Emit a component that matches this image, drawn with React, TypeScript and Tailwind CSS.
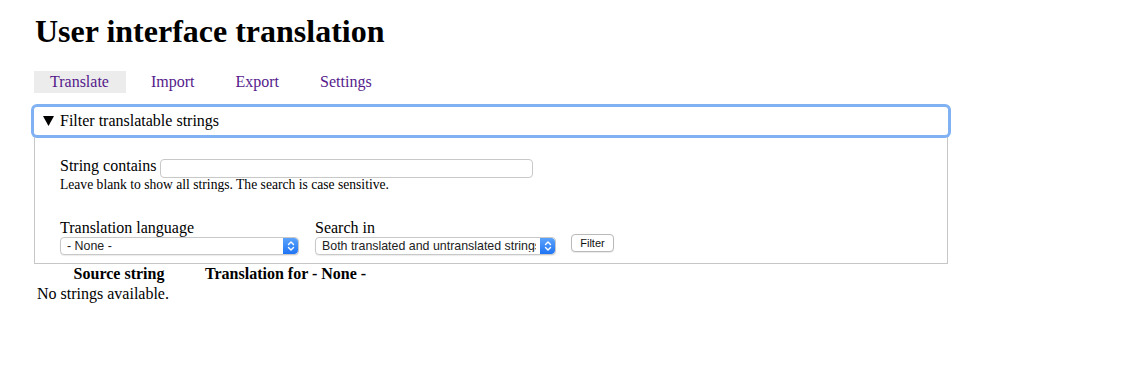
const tabs = ["Translate", "Import", "Export", "Settings"];

function Stepper() {
  return (
    <span className="flex h-full w-[15px] shrink-0 items-center justify-center rounded-r-[4px] bg-gradient-to-b from-[#5aa2fb] to-[#1e74f4]">
      <svg width="8" height="12" viewBox="0 0 8 12" fill="none" stroke="white" strokeWidth="1.4" strokeLinecap="round" strokeLinejoin="round">
        <path d="M1.5 4.5 4 2l2.5 2.5" />
        <path d="M1.5 7.5 4 10l2.5-2.5" />
      </svg>
    </span>
  );
}

function FakeSelect({ value, width }: { value: string; width: string }) {
  return (
    <div className={`flex h-[18px] ${width} items-center overflow-hidden rounded-[4px] border border-[#c8c8c8] bg-white shadow-[0_1px_1px_rgba(0,0,0,0.08)]`}>
      <span className="mr-[4px] flex-1 overflow-hidden whitespace-nowrap pl-[6px] font-['Liberation_Sans',Arial,sans-serif] text-[12.4px] leading-none text-[#222]">
        {value}
      </span>
      <Stepper />
    </div>
  );
}

export default function App() {
  return (
    <div className="min-h-[368px] bg-white pl-[34px] font-['Liberation_Serif','Times_New_Roman',serif] text-black">
      <h1 className="pt-[14px] pl-[1px] text-[32px] font-bold leading-[35px]">User interface translation</h1>

      <nav className="mt-[22px] flex gap-[9px]">
        {tabs.map((tab, i) => (
          <a
            key={tab}
            href="#"
            className={`px-[16px] py-[2px] text-[16px] leading-[18px] text-[#551a8b] ${i === 0 ? "bg-[#ececec] pr-[17px]" : ""}`}
          >
            {tab}
          </a>
        ))}
      </nav>

      <div className="mt-[14px] w-[914px] border border-t-0 border-[#c6c6c6]">
        <div className="-ml-px -mr-px flex h-[28px] items-center rounded-[3px] bg-white pl-[9px] text-[16px] shadow-[0_0_0_3px_#80b1f3]">
          <svg width="11" height="10" viewBox="0 0 11 10" className="mr-[6px]">
            <path d="M0 0h11L5.5 10z" fill="black" />
          </svg>
          Filter translatable strings
        </div>

        <div className="px-[25px] pt-[22px] pb-[8px]">
          <div className="flex items-end gap-[4px] text-[16px] leading-[18px]">
            <label>String contains</label>
            <div className="mb-[-3px] h-[19px] w-[373px] rounded-[4px] border border-[#c8c8c8] bg-white" />
          </div>
          <p className="mt-[2px] text-[13.6px] leading-[15px]">Leave blank to show all strings. The search is case sensitive.</p>

          <div className="mt-[27px] flex items-end">
            <div className="w-[255px]">
              <div className="text-[16px] leading-[18px]">Translation language</div>
              <FakeSelect value="- None -" width="w-[239px]" />
            </div>
            <div className="w-[256px]">
              <div className="text-[16px] leading-[18px]">Search in</div>
              <FakeSelect value="Both translated and untranslated strings" width="w-[241px]" />
            </div>
            <button className="mb-[3px] h-[18px] w-[43px] rounded-[4px] border border-[#b9b9b9] bg-white font-['Liberation_Sans',Arial,sans-serif] text-[11px] leading-none text-[#111] shadow-[0_1px_1px_rgba(0,0,0,0.08)]">
              Filter
            </button>
          </div>
        </div>
      </div>

      <table className="border-separate border-spacing-x-[2px] border-spacing-y-0 text-[16px] leading-[18px]">
        <thead>
          <tr>
            <th className="w-[166px] p-[1px] text-center font-bold">Source string</th>
            <th className="p-[1px] text-center font-bold">Translation for - None -</th>
          </tr>
        </thead>
        <tbody>
          <tr>
            <td className="p-[1px]" colSpan={2}>No strings available.</td>
          </tr>
        </tbody>
      </table>
    </div>
  );
}
